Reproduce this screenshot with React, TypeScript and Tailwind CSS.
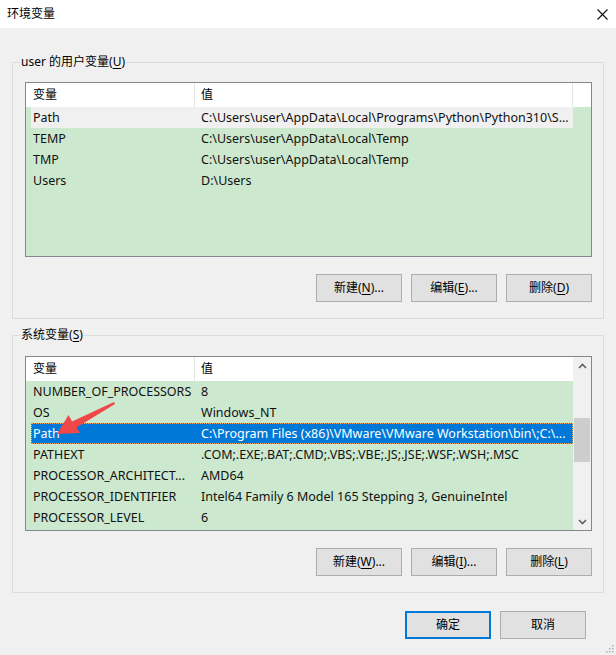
import React from "react";

const font = { fontFamily: "'Noto Sans', 'Noto Sans CJK SC', sans-serif" };

const userVars = [
  { name: "Path", value: "C:\\Users\\user\\AppData\\Local\\Programs\\Python\\Python310\\S...", state: "hover" },
  { name: "TEMP", value: "C:\\Users\\user\\AppData\\Local\\Temp" },
  { name: "TMP", value: "C:\\Users\\user\\AppData\\Local\\Temp" },
  { name: "Users", value: "D:\\Users" },
];

const sysVars = [
  { name: "NUMBER_OF_PROCESSORS", value: "8" },
  { name: "OS", value: "Windows_NT" },
  { name: "Path", value: "C:\\Program Files (x86)\\VMware\\VMware Workstation\\bin\\;C:\\...", state: "selected" },
  { name: "PATHEXT", value: ".COM;.EXE;.BAT;.CMD;.VBS;.VBE;.JS;.JSE;.WSF;.WSH;.MSC" },
  { name: "PROCESSOR_ARCHITECT...", value: "AMD64" },
  { name: "PROCESSOR_IDENTIFIER", value: "Intel64 Family 6 Model 165 Stepping 3, GenuineIntel" },
  { name: "PROCESSOR_LEVEL", value: "6" },
];

type Row = { name: string; value: string; state?: string };

function Mn({ pre, k, post }: { pre: string; k: string; post: string }) {
  return (
    <span>
      {pre}(<span className="underline underline-offset-2">{k}</span>){post}
    </span>
  );
}

function Btn({ children, primary }: { children: React.ReactNode; primary?: boolean }) {
  return (
    <div
      className={
        "w-[86px] h-[28px] flex items-center justify-center bg-[#e1e1e1] text-[12px] text-black " +
        (primary ? "border-2 border-[#0078d7]" : "border border-[#adadad]")
      }
    >
      {children}
    </div>
  );
}

function Chevron({ up }: { up?: boolean }) {
  return (
    <svg width="9" height="6" viewBox="0 0 9 6">
      <polyline
        points={up ? "1,5 4.5,1.5 8,5" : "1,1 4.5,4.5 8,1"}
        fill="none"
        stroke="#606060"
        strokeWidth="1.6"
      />
    </svg>
  );
}

function VarList({ rows, scroll }: { rows: Row[]; scroll?: boolean }) {
  return (
    <div className="h-[175px] border border-[#828790] bg-[#cce8cf] flex overflow-hidden">
      <div className="flex-1 flex flex-col min-w-0">
        <div className="h-[24px] bg-white flex text-[12px] leading-[24px] text-black shrink-0">
          <div className="w-[169px] border-r border-[#e5e5e5] pl-[7px]">变量</div>
          <div className={"pl-[6px] " + (scroll ? "flex-1" : "w-[378px] border-r border-[#e5e5e5]")}>值</div>
          {!scroll && <div className="flex-1" />}
        </div>
        {rows.map((r) => (
          <div
            key={r.name}
            className={
              "ml-[5px] w-[542px] h-[21px] flex text-[12.5px] leading-[21px] whitespace-nowrap shrink-0 " +
              (r.state === "selected"
                ? "bg-[#0078d7] text-white outline-1 outline-dotted outline-[#f0a860] -outline-offset-1"
                : r.state === "hover"
                ? "bg-[#f0f0f0] text-[#111]"
                : "text-[#111]")
            }
          >
            <div className="w-[164px] pl-[2px] overflow-hidden">{r.name}</div>
            <div className="flex-1 pl-[6px] overflow-hidden">{r.value}</div>
          </div>
        ))}
      </div>
      {scroll && (
        <div className="w-[18px] bg-[#f0f0f0] flex flex-col shrink-0">
          <div className="h-[17px] flex items-center justify-center">
            <Chevron up />
          </div>
          <div className="flex-1 pt-[44px] px-[1px]">
            <div className="h-[44px] bg-[#cdcdcd]" />
          </div>
          <div className="h-[17px] flex items-center justify-center">
            <Chevron />
          </div>
        </div>
      )}
    </div>
  );
}

function Group({
  label,
  rows,
  scroll,
  height,
  top,
  buttons,
}: {
  label: React.ReactNode;
  rows: Row[];
  scroll?: boolean;
  height: string;
  top: string;
  buttons: React.ReactNode[];
}) {
  return (
    <div className={"relative border border-[#dcdcdc] pl-[12px] pr-[11px] " + height + " " + top}>
      <div className="absolute -top-[9px] left-[7px] bg-[#f0f0f0] px-[1px] text-[12px] leading-[16px] text-black">
        {label}
      </div>
      <VarList rows={rows} scroll={scroll} />
      <div className="flex justify-end gap-[9px] mt-[17px]">
        {buttons.map((b, i) => (
          <Btn key={i}>{b}</Btn>
        ))}
      </div>
    </div>
  );
}

export default function App() {
  return (
    <div className="relative w-[616px] h-[655px] bg-[#f0f0f0] flex flex-col overflow-hidden" style={font}>
      <div className="h-[28px] bg-white flex items-center justify-between pl-[7px] pr-[8px] shrink-0">
        <span className="text-[12px] text-black">环境变量</span>
        <svg width="11" height="11" viewBox="0 0 11 11">
          <path d="M0.5 0.5 L10.5 10.5 M10.5 0.5 L0.5 10.5" stroke="#111" strokeWidth="1.1" />
        </svg>
      </div>

      <div className="pl-[12px] pr-[12px]">
        <Group
          label={<Mn pre="user 的用户变量" k="U" post="" />}
          rows={userVars}
          height="h-[257px]"
          top="mt-[34px] pt-[19px]"
          buttons={[
            <Mn pre="新建" k="N" post="..." />,
            <Mn pre="编辑" k="E" post="..." />,
            <Mn pre="删除" k="D" post="" />,
          ]}
        />
        <Group
          label={<Mn pre="系统变量" k="S" post="" />}
          rows={sysVars}
          scroll
          height="h-[258px]"
          top="mt-[16px] pt-[20px]"
          buttons={[
            <Mn pre="新建" k="W" post="..." />,
            <Mn pre="编辑" k="I" post="..." />,
            <Mn pre="删除" k="L" post="" />,
          ]}
        />
        <div className="flex justify-end gap-[9px] mt-[18px] pr-[18px]">
          <Btn primary>确定</Btn>
          <Btn>取消</Btn>
        </div>
      </div>

      {/* red annotation arrow */}
      <svg className="absolute left-[50px] top-[395px]" width="75" height="45" viewBox="50 395 75 45">
        <polygon
          points="57,434 80,433 76.5,427.5 115,404 114,402 72,421.5 68.5,415"
          fill="#f04848"
        />
      </svg>

      {/* resize grip */}
      <svg className="absolute right-[2px] bottom-[2px]" width="10" height="10" viewBox="0 0 10 10">
        {[
          [8, 2],
          [5, 5],
          [8, 5],
          [2, 8],
          [5, 8],
          [8, 8],
        ].map(([x, y], i) => (
          <rect key={i} x={x} y={y} width="1.5" height="1.5" fill="#b0b0b0" />
        ))}
      </svg>
    </div>
  );
}
